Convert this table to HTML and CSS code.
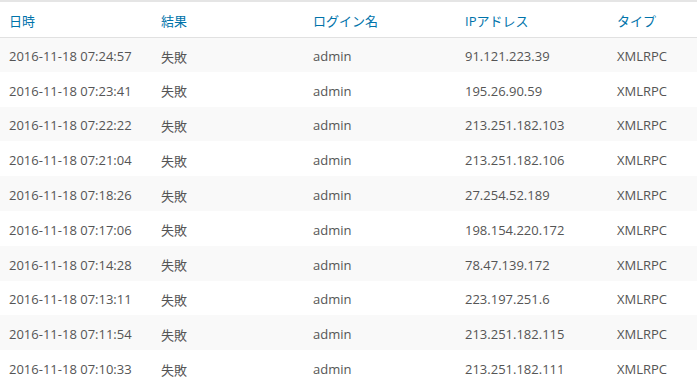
FILE: index.html
```html
<!DOCTYPE html>
<html lang="ja">
<head>
<meta charset="utf-8">
<link rel="stylesheet" href="styles.css">
</head>
<body>
<table class="log">
  <colgroup><col class="c"><col class="c"><col class="c"><col class="c"><col></colgroup>
  <thead>
    <tr class="head"><th>日時</th><th>結果</th><th>ログイン名</th><th>IPアドレス</th><th>タイプ</th></tr>
  </thead>
  <tbody>
    <tr class="alt"><td>2016-11-18 07:24:57</td><td>失敗</td><td>admin</td><td>91.121.223.39</td><td>XMLRPC</td></tr>
    <tr><td>2016-11-18 07:23:41</td><td>失敗</td><td>admin</td><td>195.26.90.59</td><td>XMLRPC</td></tr>
    <tr class="alt"><td>2016-11-18 07:22:22</td><td>失敗</td><td>admin</td><td>213.251.182.103</td><td>XMLRPC</td></tr>
    <tr><td>2016-11-18 07:21:04</td><td>失敗</td><td>admin</td><td>213.251.182.106</td><td>XMLRPC</td></tr>
    <tr class="alt"><td>2016-11-18 07:18:26</td><td>失敗</td><td>admin</td><td>27.254.52.189</td><td>XMLRPC</td></tr>
    <tr><td>2016-11-18 07:17:06</td><td>失敗</td><td>admin</td><td>198.154.220.172</td><td>XMLRPC</td></tr>
    <tr class="alt"><td>2016-11-18 07:14:28</td><td>失敗</td><td>admin</td><td>78.47.139.172</td><td>XMLRPC</td></tr>
    <tr><td>2016-11-18 07:13:11</td><td>失敗</td><td>admin</td><td>223.197.251.6</td><td>XMLRPC</td></tr>
    <tr class="alt"><td>2016-11-18 07:11:54</td><td>失敗</td><td>admin</td><td>213.251.182.115</td><td>XMLRPC</td></tr>
    <tr><td>2016-11-18 07:10:33</td><td>失敗</td><td>admin</td><td>213.251.182.111</td><td>XMLRPC</td></tr>
  </tbody>
</table>
</body>
</html>
```
FILE: styles.css
```css
html, body {
  margin: 0;
  padding: 0;
  background: #fff;
  overflow: hidden;
}
.log {
  border-collapse: collapse;
  table-layout: fixed;
  width: 100%;
  border-top: 2px solid #e5e5e5;
  font-family: "Open Sans", "Noto Sans CJK JP", sans-serif;
  font-size: 13px;
}
.log col.c {
  width: 152px;
}
.log th, .log td {
  padding: 3px 0 0 9px;
  text-align: left;
  vertical-align: middle;
  white-space: nowrap;
  overflow: hidden;
}
.log tr.head {
  height: 36px;
}
.log th {
  font-weight: normal;
  color: #0073aa;
  border-bottom: 1px solid #e1e1e1;
}
.log tbody tr {
  height: 34.8px;
}
.log td {
  color: #555;
}
.log tr.alt td {
  background: #f9f9f9;
}
```
